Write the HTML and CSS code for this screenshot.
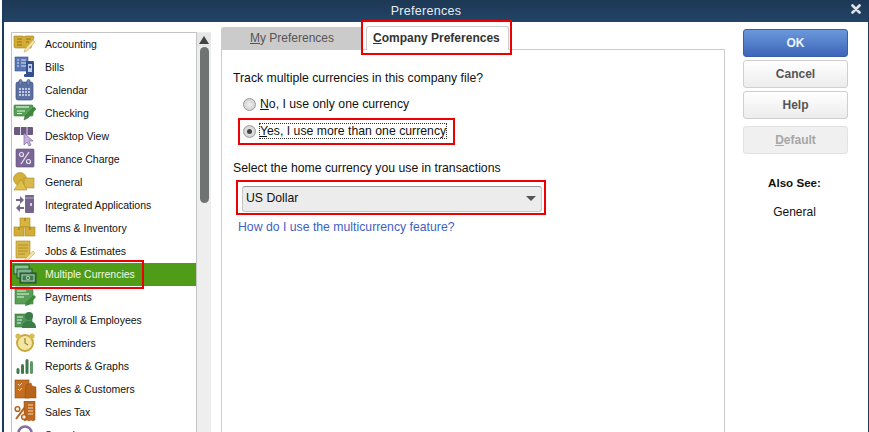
FILE: index.html
```html
<!DOCTYPE html>
<html lang="en">
<head>
    <meta charset="UTF-8">
    <meta name="viewport" content="width=device-width, initial-scale=1.0">
    <title>Preferences</title>
    <link rel="stylesheet" href="styles.css">
</head>
<body>
    <div class="dialog">
        <div class="titlebar">
            <span class="title-text">Preferences</span>
            <svg class="close-icon" width="10" height="10" viewBox="0 0 10 10"><path d="M1.5 1.5l7 7M8.5 1.5l-7 7" stroke="#dfe4ea" stroke-width="2.6" stroke-linecap="round"/></svg>
        </div>
        <div class="content">
            <div class="sidebar">
                <ul class="pref-list">
                    <li><svg class="pref-icon" viewBox="0 0 24 23"><path d="M1 3h9l1 1 1-1h8l1 1-3 11H2L1 14z" fill="#d2ac35" stroke="#a08220" stroke-width=".6"/><path d="M4 6h5M4 9h5M4 12h5M13 6h5M13 9h3" stroke="#8f7420" stroke-width="1.2"/><path d="M20 7l2 2-8 9-3 1 1-3z" fill="#f1e2a6" stroke="#c7ad55" stroke-width=".6"/></svg>Accounting</li>
                    <li><svg class="pref-icon" viewBox="0 0 24 23"><rect x="2" y="1" width="13" height="14" fill="#5a76b2" stroke="#3b5590" stroke-width=".6"/><path d="M4 4h2M8 4h5M4 7h2M8 7h5M4 10h2M8 10h5" stroke="#dbe4f5" stroke-width="1.2"/><rect x="13" y="5" width="8" height="15" rx="1" fill="#33508f"/><rect x="11" y="18" width="10" height="3" rx="1" fill="#33508f"/><rect x="15" y="8" width="4" height="8" fill="#c5d1ea"/><circle cx="17" cy="11" r="1.2" fill="#33508f"/></svg>Bills</li>
                    <li><svg class="pref-icon" viewBox="0 0 24 23"><rect x="3" y="3" width="17" height="18" rx="2" fill="#5b71a4" stroke="#3d5080" stroke-width=".7"/><rect x="6" y="0.5" width="3" height="6" rx="1.5" fill="#7588b5" stroke="#3d5080" stroke-width=".7"/><rect x="14" y="0.5" width="3" height="6" rx="1.5" fill="#7588b5" stroke="#3d5080" stroke-width=".7"/><path d="M6 10h11M6 13h11M6 16h11" stroke="#dfe5f2" stroke-width="1.6" stroke-dasharray="2 1"/></svg>Calendar</li>
                    <li><svg class="pref-icon" viewBox="0 0 24 23"><rect x="1" y="3" width="19" height="11" rx="1" fill="#58a058" stroke="#377337" stroke-width=".6"/><path d="M3 5h13" stroke="#c8e6c8" stroke-width="1.5"/><path d="M4 9h8M4 11.5h5" stroke="#e6f4e6" stroke-width="1"/><path d="M21 5l2 2-8 9-4 2 1-4z" fill="#3f8a3f" stroke="#2e6a2e" stroke-width=".5"/></svg>Checking</li>
                    <li><svg class="pref-icon" viewBox="0 0 24 23"><rect x="1" y="2" width="19" height="8" rx="1" fill="#6a5a82"/><path d="M7.5 2v8M14 2v8" stroke="#dcd6e4" stroke-width="1"/><path d="M11 8v12l3-3 2 4 2-1-2-4h4z" fill="#c4aede" stroke="#7c6a98" stroke-width=".7"/></svg>Desktop View</li>
                    <li><svg class="pref-icon" viewBox="0 0 24 23"><rect x="3" y="1" width="18" height="18" rx="1" fill="#7a6796" stroke="#5b4a76" stroke-width=".6"/><circle cx="8.5" cy="6.5" r="2" fill="none" stroke="#e8e2f0" stroke-width="1.2"/><circle cx="15.5" cy="13.5" r="2" fill="none" stroke="#e8e2f0" stroke-width="1.2"/><path d="M16 4l-8 12" stroke="#e8e2f0" stroke-width="1.3"/></svg>Finance Charge</li>
                    <li><svg class="pref-icon" viewBox="0 0 24 23"><circle cx="7" cy="8" r="6.5" fill="#d6b13a" stroke="#a88a22" stroke-width=".6"/><rect x="11" y="7" width="10" height="10" fill="#d9b94e" stroke="#a88a22" stroke-width=".6"/><path d="M8 8l6 11H1z" fill="#e0c04a" stroke="#a88a22" stroke-width=".6"/></svg>General</li>
                    <li><svg class="pref-icon" viewBox="0 0 24 23"><rect x="12" y="1" width="9" height="18" rx="1" fill="#75648c"/><path d="M12 4h9" stroke="#b7abc8" stroke-width="1"/><rect x="17" y="9" width="2" height="3" fill="#d8d0e4"/><path d="M3 5h4V2l4 4-4 4V7H3zM11 13H7v-3l-4 4 4 4v-3h4z" fill="#75648c"/></svg>Integrated Applications</li>
                    <li><svg class="pref-icon" viewBox="0 0 24 23"><rect x="7" y="1" width="10" height="9" fill="#d9b43e" stroke="#a88a22" stroke-width=".6"/><rect x="1" y="10" width="10" height="9" fill="#d2ac35" stroke="#a88a22" stroke-width=".6"/><rect x="12" y="10" width="10" height="9" fill="#d2ac35" stroke="#a88a22" stroke-width=".6"/><path d="M12 1v3M6 10v3M17 10v3" stroke="#8f7420" stroke-width="1"/></svg>Items &amp; Inventory</li>
                    <li><svg class="pref-icon" viewBox="0 0 24 23"><rect x="3" y="1" width="14" height="17" fill="#d9b84a" stroke="#a88a22" stroke-width=".6"/><path d="M5 5h10M5 8h10M5 11h10M5 14h7" stroke="#a88a22" stroke-width=".9"/><path d="M20 11l2 2-8 8-3 1 1-3z" fill="#f1e2a6" stroke="#c7ad55" stroke-width=".6"/></svg>Jobs &amp; Estimates</li>
                    <li class="selected"><svg class="pref-icon" viewBox="0 0 24 23"><rect x="1" y="2" width="15" height="9" fill="#8cc49a" stroke="#1f4f33" stroke-width=".9"/><rect x="4" y="6" width="15" height="9" fill="#7db58b" stroke="#1f4f33" stroke-width=".9"/><rect x="7" y="10" width="16" height="10" fill="#3f7a4c" stroke="#1c4229" stroke-width=".9"/><rect x="9" y="12" width="12" height="6" fill="none" stroke="#cde5cd" stroke-width=".8"/><circle cx="15" cy="15" r="1.7" fill="none" stroke="#cde5cd" stroke-width=".8"/></svg>Multiple Currencies</li>
                    <li><svg class="pref-icon" viewBox="0 0 24 23"><path d="M2 1h15l3 3v14H2z" fill="#58a058" stroke="#377337" stroke-width=".6"/><path d="M4 5h9M4 8h12M4 11h7" stroke="#e6f4e6" stroke-width="1"/><path d="M21 9l2 2-7 8-4 1 1-4z" fill="#3f8a3f"/></svg>Payments</li>
                    <li><svg class="pref-icon" viewBox="0 0 24 23"><rect x="2" y="5" width="17" height="13" fill="#4e9556" stroke="#377337" stroke-width=".6"/><path d="M4 8h6M4 11h5M4 14h4" stroke="#e6f4e6" stroke-width="1.1"/><circle cx="16" cy="7" r="4" fill="#3b7c48"/><path d="M9 19c0-5 3-7 7-7s7 2 7 7z" fill="#3b7c48"/></svg>Payroll &amp; Employees</li>
                    <li><svg class="pref-icon" viewBox="0 0 24 23"><circle cx="12" cy="11" r="8" fill="#f3e6a4" stroke="#c7a93a" stroke-width="2"/><circle cx="5" cy="4" r="2.6" fill="#d9bb4e"/><circle cx="19" cy="4" r="2.6" fill="#d9bb4e"/><path d="M12 6v5l3 2" fill="none" stroke="#9b8328" stroke-width="1.2"/></svg>Reminders</li>
                    <li><svg class="pref-icon" viewBox="0 0 24 23"><rect x="3.5" y="13" width="3" height="6" rx="1.5" fill="#3f7a4c"/><rect x="8" y="9" width="3" height="10" rx="1.5" fill="#3f7a4c"/><rect x="12.5" y="4" width="3" height="15" rx="1.5" fill="#3f7a4c"/><rect x="17" y="6" width="3" height="13" rx="1.5" fill="#5d9a68"/></svg>Reports &amp; Graphs</li>
                    <li><svg class="pref-icon" viewBox="0 0 24 23"><rect x="2" y="2" width="14" height="18" fill="#c56e1f" stroke="#8f4a10" stroke-width=".6"/><path d="M5 6l1.5 1.5L9 5M5 11l1.5 1.5L9 10" fill="none" stroke="#f5dcc0" stroke-width="1"/><path d="M12 20l1-13 5-2 1 3 4 1v11z" fill="#b8641a" stroke="#8f4a10" stroke-width=".5"/></svg>Sales &amp; Customers</li>
                    <li><svg class="pref-icon" viewBox="0 0 24 23"><path d="M11 0h11v19l-2 1-2-1-2 1-2-1-3 1z" fill="#bd6a20" stroke="#8f4a10" stroke-width=".5"/><path d="M15 4h5M15 7h5M15 10h5M15 13h5" stroke="#f5dcc0" stroke-width="1"/><circle cx="4.5" cy="8" r="2.4" fill="#f6ead9" stroke="#b2601a" stroke-width="1.4"/><circle cx="11" cy="16" r="2.4" fill="#f6ead9" stroke="#b2601a" stroke-width="1.4"/><path d="M12 6L3 18" stroke="#b2601a" stroke-width="2"/></svg>Sales Tax</li>
                    <li><svg class="pref-icon" viewBox="0 0 24 23"><circle cx="12" cy="9" r="6.5" fill="#fff" stroke="#8270a0" stroke-width="2.6"/></svg>Search</li>
                </ul>
                <div class="list-scrollbar">
                    <div class="scroll-up"></div>
                    <div class="scroll-thumb"></div>
                </div>
            </div>

            <div class="prefs">
                <div class="tabs">
                    <div class="tab tab-my"><span class="ul">M</span>y Preferences</div>
                    <div class="tab tab-company"><span class="ul">C</span>ompany Preferences</div>
                </div>
                <div class="tab-panel">
                    <p class="question">Track multiple currencies in this company file?</p>
                    <div class="radio-row">
                        <span class="radio"></span>
                        <span><span class="ul">N</span>o, I use only one currency</span>
                    </div>
                    <div class="radio-row radio-row-on">
                        <span class="radio radio-checked"></span>
                        <span class="focused"><span class="ul">Y</span>es, I use more than one currency</span>
                    </div>
                    <p class="select-label">Select the home currency you use in transactions</p>
                    <div class="select-box">
                        <span>US Dollar</span>
                        <span class="select-arrow"></span>
                    </div>
                    <a class="help-link" href="#">How do I use the multicurrency feature?</a>
                </div>
            </div>

            <div class="actions">
                <button class="btn btn-primary">OK</button>
                <button class="btn">Cancel</button>
                <button class="btn">Help</button>
                <button class="btn btn-disabled"><span class="ul">D</span>efault</button>
                <div class="also-see">Also See:</div>
                <div class="also-item">General</div>
            </div>
        </div>

        <!-- red callouts drawn over the screenshot -->
        <div class="callout callout-list"></div>
        <div class="callout callout-tab"></div>
        <div class="callout callout-radio"></div>
        <div class="callout callout-select"></div>
    </div>
</body>
</html>
```

FILE: styles.css
```css
html, body {
    margin: 0;
    height: 100%;
    overflow: hidden;
}
body {
    font-family: "Liberation Sans", Arial, sans-serif;
    font-size: 12px;
    color: #111;
    background: #fff;
    padding-left: 2px;
    box-sizing: border-box;
}
.dialog {
    height: 432px;
    background: #fff;
    border-left: 2px solid #1e3a5a;
    border-right: 1px solid #1e3a5a;
    box-sizing: border-box;
    overflow: hidden;
}
.titlebar {
    height: 22px;
    background: linear-gradient(#1d3854, #234468);
    color: #e8edf2;
    display: flex;
    align-items: center;
    justify-content: center;
    padding-right: 20px;
    box-sizing: border-box;
    position: relative;
}
.title-text {
    font-size: 12.5px;
    letter-spacing: 0.3px;
}
.close-icon {
    position: absolute;
    right: 7px;
    top: 4px;
}
.content {
    display: flex;
    padding: 5px 0 0 7px;
}

/* left list */
.sidebar {
    display: flex;
    width: 200px;
    height: 420px;
    margin-top: 5px;
    flex: none;
}
.pref-list {
    list-style: none;
    margin: 0;
    padding: 0;
    width: 186px;
    border: 1px solid #c4c4c4;
    border-bottom: none;
    box-sizing: border-box;
    font-size: 10.5px;
}
.pref-list li {
    display: flex;
    align-items: center;
    height: 23px;
    padding: 0 0 1px 1px;
    box-sizing: border-box;
    gap: 8px;
    white-space: nowrap;
}
.pref-list .selected {
    background: #4e9c18;
    color: #f1f7ea;
}
.pref-icon {
    width: 24px;
    height: 23px;
    flex: none;
}
.list-scrollbar {
    width: 14px;
    background: #eeeeee;
    display: flex;
    flex-direction: column;
    align-items: center;
    padding-top: 1px;
}
.scroll-up {
    width: 14px;
    height: 14px;
    background: #e6e6e6;
    display: flex;
    align-items: center;
    justify-content: center;
}
.scroll-up::before {
    content: "";
    border-left: 5px solid transparent;
    border-right: 5px solid transparent;
    border-bottom: 8px solid #3e4442;
}
.scroll-thumb {
    width: 9px;
    height: 156px;
    background: #6f7472;
    border-radius: 5px;
}

/* tabs and panel */
.prefs {
    margin-left: 10px;
    width: 504px;
    flex: none;
}
.tabs {
    display: flex;
    height: 22px;
    align-items: flex-end;
}
.tab {
    display: flex;
    align-items: center;
    box-sizing: border-box;
}
.tab-my {
    width: 140px;
    height: 22px;
    background: #cbcbcb;
    color: #555;
    padding-left: 29px;
    border-radius: 3px 0 0 0;
}
.tab-company {
    width: 143px;
    height: 24px;
    margin: 0 0 -1px 5px;
    background: #fff;
    border: 1px solid #ccc;
    border-bottom: none;
    border-radius: 3px 3px 0 0;
    padding: 0 0 2px 6px;
    font-weight: bold;
    color: #333;
    position: relative;
}
.ul {
    text-decoration: underline;
}
.tab-panel {
    height: 400px;
    border: 1px solid #ccc;
    box-sizing: border-box;
    padding: 21px 11px 0;
    font-size: 12.25px;
}
.question {
    margin: 0;
    line-height: 14px;
}
.radio-row {
    display: flex;
    align-items: center;
    gap: 4px;
    height: 14px;
    margin: 12px 0 0 10px;
}
.radio-row-on {
    margin-top: 13px;
}
.radio {
    width: 13px;
    height: 13px;
    border-radius: 50%;
    box-sizing: border-box;
    border: 1px solid #9a9a9a;
    background: radial-gradient(#f0f0f0, #c6c6c6);
    display: flex;
    align-items: center;
    justify-content: center;
}
.radio-checked::before {
    content: "";
    width: 5px;
    height: 5px;
    border-radius: 50%;
    background: #444;
}
.focused {
    outline: 1px dotted #333;
}
.select-label {
    margin: 23px 0 0;
    line-height: 14px;
}
.select-box {
    display: flex;
    align-items: center;
    justify-content: space-between;
    width: 300px;
    height: 26px;
    margin: 11px 0 0 9px;
    padding: 0 4px 2px 3px;
    box-sizing: border-box;
    background: #ececec;
    border: 1px solid #c6c6c6;
    border-top-color: #999;
    border-radius: 3px;
}
.select-arrow {
    border-left: 5px solid transparent;
    border-right: 5px solid transparent;
    border-top: 5px solid #555;
    margin-right: 1px;
}
.help-link {
    display: block;
    margin: 8px 0 0 5px;
    line-height: 14px;
    color: #3f5fc4;
    text-decoration: none;
}

/* right buttons */
.actions {
    width: 105px;
    margin-left: 18px;
    flex: none;
    display: flex;
    flex-direction: column;
    align-items: center;
    gap: 3px;
    padding-top: 2px;
}
.btn {
    width: 105px;
    height: 28px;
    font: bold 12px "Liberation Sans", Arial, sans-serif;
    color: #555;
    background: linear-gradient(#fff, #ececec);
    border: 1px solid #cfcfcf;
    border-radius: 3px;
    padding: 0;
}
.btn-primary {
    color: #eef3fb;
    background: linear-gradient(#6b98dc, #3d66b8);
    border-color: #3a5fa8;
}
.btn-disabled {
    margin-top: 4px;
    color: #a6a6a6;
    background: #f0f0f0;
    border-color: #e2e2e2;
}
.also-see {
    font-weight: bold;
    font-size: 11.6px;
    line-height: 14px;
    margin: 19px 2px 0 0;
}
.also-item {
    line-height: 14px;
    margin: 12px 2px 0 0;
}

/* callouts */
.callout {
    position: absolute;
    border: 2px solid #ee0000;
    box-sizing: border-box;
}
.callout-list {
    left: 10px;
    top: 260px;
    width: 134px;
    height: 29px;
}
.callout-tab {
    left: 361px;
    top: 20px;
    width: 151px;
    height: 35px;
}
.callout-radio {
    left: 238px;
    top: 118px;
    width: 217px;
    height: 27px;
}
.callout-select {
    left: 236px;
    top: 180px;
    width: 310px;
    height: 35px;
}
```
